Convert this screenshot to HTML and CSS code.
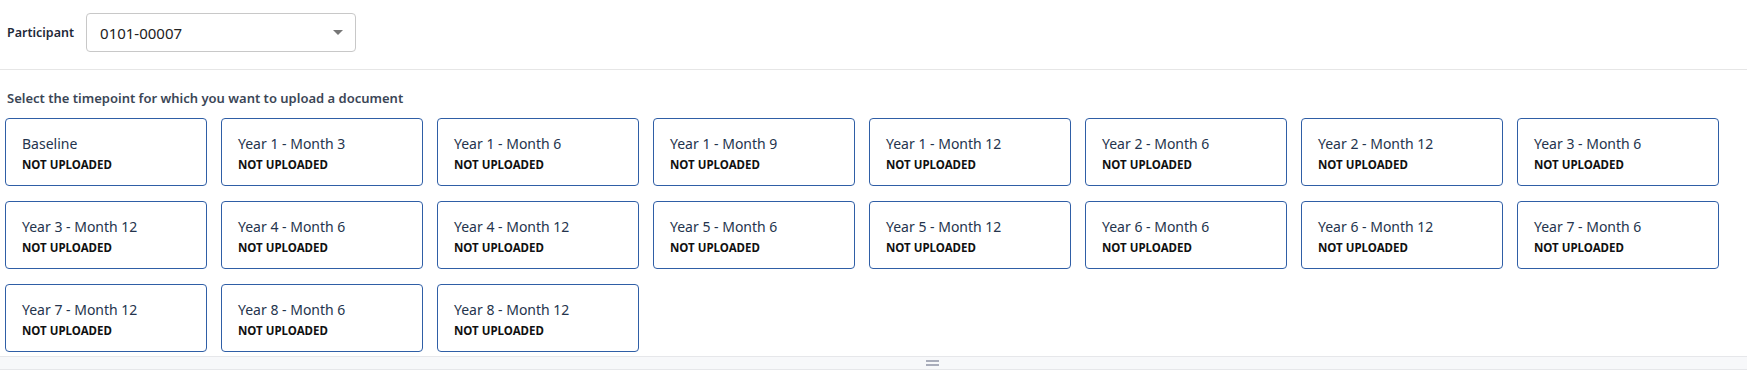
FILE: index.html
```html
<!DOCTYPE html>
<html lang="en">
<head>
    <meta charset="UTF-8">
    <meta name="viewport" content="width=device-width, initial-scale=1.0">
    <title>Upload Document</title>
    <link rel="stylesheet" href="styles.css">
</head>
<body>
    <div class="header">
        <label class="field-label" for="participant">Participant</label>
        <div class="select">
            <span class="select-value">0101-00007</span>
            <span class="select-arrow"></span>
        </div>
    </div>

    <div class="section">
        <div class="section-title">Select the timepoint for which you want to upload a document</div>
        <div class="timepoints">
            <div class="card"><div class="card-name">Baseline</div><div class="card-status">NOT UPLOADED</div></div>
            <div class="card"><div class="card-name">Year 1 - Month 3</div><div class="card-status">NOT UPLOADED</div></div>
            <div class="card"><div class="card-name">Year 1 - Month 6</div><div class="card-status">NOT UPLOADED</div></div>
            <div class="card"><div class="card-name">Year 1 - Month 9</div><div class="card-status">NOT UPLOADED</div></div>
            <div class="card"><div class="card-name">Year 1 - Month 12</div><div class="card-status">NOT UPLOADED</div></div>
            <div class="card"><div class="card-name">Year 2 - Month 6</div><div class="card-status">NOT UPLOADED</div></div>
            <div class="card"><div class="card-name">Year 2 - Month 12</div><div class="card-status">NOT UPLOADED</div></div>
            <div class="card"><div class="card-name">Year 3 - Month 6</div><div class="card-status">NOT UPLOADED</div></div>
            <div class="card"><div class="card-name">Year 3 - Month 12</div><div class="card-status">NOT UPLOADED</div></div>
            <div class="card"><div class="card-name">Year 4 - Month 6</div><div class="card-status">NOT UPLOADED</div></div>
            <div class="card"><div class="card-name">Year 4 - Month 12</div><div class="card-status">NOT UPLOADED</div></div>
            <div class="card"><div class="card-name">Year 5 - Month 6</div><div class="card-status">NOT UPLOADED</div></div>
            <div class="card"><div class="card-name">Year 5 - Month 12</div><div class="card-status">NOT UPLOADED</div></div>
            <div class="card"><div class="card-name">Year 6 - Month 6</div><div class="card-status">NOT UPLOADED</div></div>
            <div class="card"><div class="card-name">Year 6 - Month 12</div><div class="card-status">NOT UPLOADED</div></div>
            <div class="card"><div class="card-name">Year 7 - Month 6</div><div class="card-status">NOT UPLOADED</div></div>
            <div class="card"><div class="card-name">Year 7 - Month 12</div><div class="card-status">NOT UPLOADED</div></div>
            <div class="card"><div class="card-name">Year 8 - Month 6</div><div class="card-status">NOT UPLOADED</div></div>
            <div class="card"><div class="card-name">Year 8 - Month 12</div><div class="card-status">NOT UPLOADED</div></div>
        </div>
    </div>

    <div class="resize-bar">
        <span class="grip"></span>
    </div>
</body>
</html>
```

FILE: styles.css
```css
* {
    margin: 0;
    padding: 0;
    box-sizing: border-box;
    font-family: 'Noto Sans', 'Open Sans', sans-serif;
}

body {
    background: #fff;
    color: #1f2937;
}

.header {
    height: 70px;
    display: flex;
    align-items: flex-start;
    padding: 13px 0 0 7px;
    border-bottom: 1px solid #e6e6e6;
}

.field-label {
    font-size: 12.5px;
    font-weight: 600;
    color: #1f2a3a;
    line-height: 39px;
    margin-right: 12px;
}

.select {
    width: 270px;
    height: 39px;
    border: 1px solid #c8c8c8;
    border-radius: 4px;
    display: flex;
    align-items: center;
    justify-content: space-between;
    padding: 0 12px 0 13px;
}

.select-value {
    font-size: 15px;
    color: #222;
}

.select-arrow {
    width: 0;
    height: 0;
    border-left: 5px solid transparent;
    border-right: 5px solid transparent;
    border-top: 5px solid #777;
}

.section {
    padding: 20px 0 4px 5px;
}

.section-title {
    font-size: 13px;
    font-weight: 600;
    color: #3b4656;
    line-height: 16px;
    padding-left: 2px;
    margin-bottom: 12px;
}

.timepoints {
    display: grid;
    grid-template-columns: repeat(8, 202px);
    column-gap: 14px;
    row-gap: 15px;
}

.card {
    height: 68px;
    border: 1px solid #2f5ea6;
    border-radius: 4px;
    padding: 16px 0 0 16px;
}

.card-name {
    font-size: 14px;
    color: #24344d;
    line-height: 18px;
}

.card-status {
    font-size: 11.5px;
    font-weight: 700;
    color: #111;
    line-height: 16px;
    margin-top: 4px;
}

.resize-bar {
    height: 14px;
    background: #f7f8fa;
    border-top: 1px solid #e6e7ea;
    border-bottom: 1px solid #e6e7ea;
    display: flex;
    justify-content: center;
    align-items: center;
    padding-left: 118px;
}

.grip {
    width: 13px;
    height: 6px;
    border-top: 2px solid #a9adbb;
    border-bottom: 2px solid #a9adbb;
}
```
